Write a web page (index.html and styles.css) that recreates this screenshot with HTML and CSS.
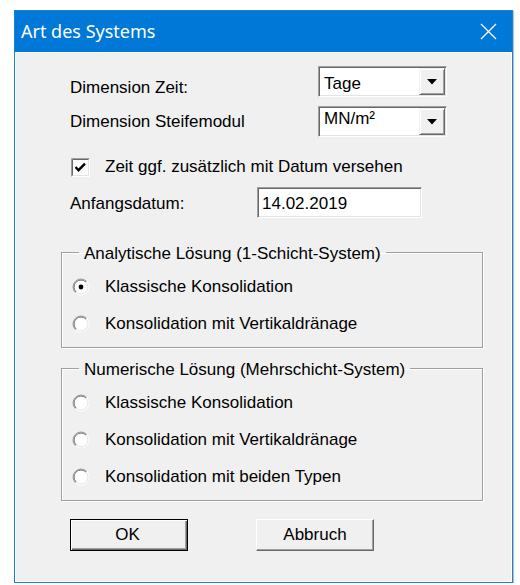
FILE: index.html
```html
<!DOCTYPE html>
<html lang="de">
<head>
<meta charset="utf-8">
<title>Art des Systems</title>
<link rel="stylesheet" href="styles.css">
</head>
<body>
<div class="window">
  <div class="titlebar">
    <span class="title">Art des Systems</span>
    <svg class="close" viewBox="0 0 17 17" width="17" height="17"><path d="M1 1L16 16M16 1L1 16" stroke="#fff" stroke-width="1.4" fill="none"/></svg>
  </div>
  <div class="client">
    <div class="row row-zeit">
      <span class="label label-zeit">Dimension Zeit:</span>
      <div class="combo">
        <span class="value value-zeit">Tage</span>
        <span class="dropbtn"><svg viewBox="0 0 10 6" width="10" height="6"><path d="M0 0H10L5 5.5Z" fill="#000"/></svg></span>
      </div>
    </div>
    <div class="row row-steife">
      <span class="label label-steife">Dimension Steifemodul</span>
      <div class="combo">
        <span class="value value-steife">MN/m²</span>
        <span class="dropbtn"><svg viewBox="0 0 10 6" width="10" height="6"><path d="M0 0H10L5 5.5Z" fill="#000"/></svg></span>
      </div>
    </div>
    <div class="row row-check">
      <svg class="checkbox" viewBox="0 0 19 19" width="19" height="19">
        <rect x="0" y="0" width="19" height="19" fill="#fff"/>
        <path d="M0.5 18.5H18.5V0.5" stroke="#fff" fill="none"/>
        <path d="M1.5 17.5H17.5V1.5" stroke="#e3e3e3" fill="none"/>
        <path d="M0.5 18.5V0.5H18.5" stroke="#a0a0a0" fill="none"/>
        <path d="M1.5 17.5V1.5H17.5" stroke="#696969" fill="none"/>
        <path d="M4.5 9L7.5 12.2L14 5.6" stroke="#000" stroke-width="2.4" fill="none"/>
      </svg>
      <span class="text">Zeit ggf. zusätzlich mit Datum versehen</span>
    </div>
    <div class="row row-date">
      <span class="label label-date">Anfangsdatum:</span>
      <div class="edit"><span class="value value-date">14.02.2019</span></div>
    </div>

    <fieldset class="group group-analytic">
      <legend class="legend">Analytische Lösung (1-Schicht-System)</legend>
      <div class="option">
        <svg class="radio" viewBox="0 0 18 18" width="18" height="18">
          <circle cx="9" cy="9" r="8" fill="#fff"/>
          <path d="M14.66 3.34A8 8 0 0 1 3.34 14.66" stroke="#fff" fill="none"/>
          <path d="M13.95 4.05A7 7 0 0 1 4.05 13.95" stroke="#e3e3e3" fill="none"/>
          <path d="M3.34 14.66A8 8 0 0 1 14.66 3.34" stroke="#a0a0a0" fill="none"/>
          <path d="M4.05 13.95A7 7 0 0 1 13.95 4.05" stroke="#696969" fill="none"/>
          <circle cx="9" cy="9" r="2.4" fill="#000"/>
        </svg>
        <span class="text">Klassische Konsolidation</span>
      </div>
      <div class="option">
        <svg class="radio" viewBox="0 0 18 18" width="18" height="18">
          <circle cx="9" cy="9" r="8" fill="#fff"/>
          <path d="M14.66 3.34A8 8 0 0 1 3.34 14.66" stroke="#fff" fill="none"/>
          <path d="M13.95 4.05A7 7 0 0 1 4.05 13.95" stroke="#e3e3e3" fill="none"/>
          <path d="M3.34 14.66A8 8 0 0 1 14.66 3.34" stroke="#a0a0a0" fill="none"/>
          <path d="M4.05 13.95A7 7 0 0 1 13.95 4.05" stroke="#696969" fill="none"/>
        </svg>
        <span class="text">Konsolidation mit Vertikaldränage</span>
      </div>
    </fieldset>

    <fieldset class="group group-numeric">
      <legend class="legend">Numerische Lösung (Mehrschicht-System)</legend>
      <div class="option">
        <svg class="radio" viewBox="0 0 18 18" width="18" height="18">
          <circle cx="9" cy="9" r="8" fill="#fff"/>
          <path d="M14.66 3.34A8 8 0 0 1 3.34 14.66" stroke="#fff" fill="none"/>
          <path d="M13.95 4.05A7 7 0 0 1 4.05 13.95" stroke="#e3e3e3" fill="none"/>
          <path d="M3.34 14.66A8 8 0 0 1 14.66 3.34" stroke="#a0a0a0" fill="none"/>
          <path d="M4.05 13.95A7 7 0 0 1 13.95 4.05" stroke="#696969" fill="none"/>
        </svg>
        <span class="text">Klassische Konsolidation</span>
      </div>
      <div class="option">
        <svg class="radio" viewBox="0 0 18 18" width="18" height="18">
          <circle cx="9" cy="9" r="8" fill="#fff"/>
          <path d="M14.66 3.34A8 8 0 0 1 3.34 14.66" stroke="#fff" fill="none"/>
          <path d="M13.95 4.05A7 7 0 0 1 4.05 13.95" stroke="#e3e3e3" fill="none"/>
          <path d="M3.34 14.66A8 8 0 0 1 14.66 3.34" stroke="#a0a0a0" fill="none"/>
          <path d="M4.05 13.95A7 7 0 0 1 13.95 4.05" stroke="#696969" fill="none"/>
        </svg>
        <span class="text">Konsolidation mit Vertikaldränage</span>
      </div>
      <div class="option">
        <svg class="radio" viewBox="0 0 18 18" width="18" height="18">
          <circle cx="9" cy="9" r="8" fill="#fff"/>
          <path d="M14.66 3.34A8 8 0 0 1 3.34 14.66" stroke="#fff" fill="none"/>
          <path d="M13.95 4.05A7 7 0 0 1 4.05 13.95" stroke="#e3e3e3" fill="none"/>
          <path d="M3.34 14.66A8 8 0 0 1 14.66 3.34" stroke="#a0a0a0" fill="none"/>
          <path d="M4.05 13.95A7 7 0 0 1 13.95 4.05" stroke="#696969" fill="none"/>
        </svg>
        <span class="text">Konsolidation mit beiden Typen</span>
      </div>
    </fieldset>

    <div class="row row-buttons">
      <div class="button button-default">OK</div>
      <div class="button button-cancel">Abbruch</div>
    </div>
  </div>
</div>
</body>
</html>
```
FILE: styles.css
```css
html, body {
  margin: 0;
  padding: 0;
  background: #ffffff;
}

body {
  padding: 10px 0 0 14px;
}

.window {
  width: 499px;
  height: 573px;
  box-sizing: border-box;
  border: 1px solid #1883d7;
  background: #0078d7;
  display: flex;
  flex-direction: column;
  box-shadow: 1px 1px 1px rgba(0, 0, 0, 0.25);
}

.titlebar {
  height: 41px;
  box-sizing: border-box;
  display: flex;
  align-items: flex-start;
  justify-content: space-between;
  padding: 10px 15px 0 6px;
  background: #0078d7;
  color: #ffffff;
}

.title {
  font-family: "Noto Sans", "Open Sans", sans-serif;
  font-size: 18px;
  line-height: 20px;
}

.close {
  display: block;
  margin-top: 2px;
}

.client {
  flex: 1;
  background: #f0f0f0;
  border: 1px solid #ffffff;
  padding: 13px 0 0 45px;
  font-family: "Liberation Sans", Arial, sans-serif;
  font-size: 17px;
  line-height: 20px;
  color: #000000;
}

.row {
  display: flex;
  align-items: flex-start;
  margin-left: 9px;
}

.label {
  display: block;
}

.row-zeit .label,
.row-steife .label {
  width: 248px;
}

.label-zeit {
  margin-top: 12px;
}

.row-steife {
  margin-top: 8px;
}

.label-steife {
  margin-top: 6px;
}

.combo,
.edit {
  height: 31px;
  box-sizing: border-box;
  background: #ffffff;
  border: 1px solid;
  border-color: #a0a0a0 #ffffff #ffffff #a0a0a0;
  box-shadow: inset 1px 1px 0 #696969, inset -1px -1px 0 #e3e3e3;
  display: flex;
  align-items: stretch;
}

.combo {
  width: 129px;
  padding: 1px;
}

.value {
  flex: 1;
  padding-left: 4px;
}

.value-zeit {
  padding-top: 6px;
}

.value-steife {
  padding-top: 1px;
}

.dropbtn {
  width: 26px;
  box-sizing: border-box;
  background: #f0f0f0;
  border: 1px solid;
  border-color: #f0f0f0 #696969 #696969 #f0f0f0;
  box-shadow: inset 1px 1px 0 #ffffff, inset -1px -1px 0 #a0a0a0;
  display: flex;
  align-items: center;
  justify-content: center;
}

.dropbtn svg {
  display: block;
}

.row-check {
  margin-top: 20px;
  height: 20px;
  align-items: center;
}

.checkbox {
  display: block;
  margin-left: 1px;
  margin-right: 15px;
}

.row-date {
  margin-top: 10px;
}

.label-date {
  width: 187px;
  margin-top: 7px;
}

.edit {
  width: 165px;
  padding: 1px;
}

.value-date {
  padding-top: 5px;
  padding-left: 3px;
}

.group {
  width: 422px;
  box-sizing: border-box;
  margin: 0;
  border: 1px solid #a0a0a0;
  box-shadow: inset 1px 1px 0 #ffffff, 1px 1px 0 #ffffff;
  padding: 4px 0 5px 10px;
  min-width: 0;
}

.group-analytic {
  margin-top: 23px;
}

.group-numeric {
  margin-top: 9px;
}

.legend {
  padding: 3px 5px 0;
  margin-left: 7px;
}

.option {
  height: 37px;
  display: flex;
  align-items: center;
}

.radio {
  display: block;
  margin-right: 15px;
}

.row-buttons {
  margin-top: 18px;
}

.button {
  width: 118px;
  height: 32px;
  box-sizing: border-box;
  background: #f0f0f0;
  display: flex;
  align-items: center;
  justify-content: center;
}

.button-default {
  border: 1px solid #000000;
  box-shadow: inset 1px 1px 0 #ffffff, inset -1px -1px 0 #696969, inset -2px -2px 0 #a0a0a0;
  padding-right: 3px;
}

.button-cancel {
  margin-left: 68px;
  border: 1px solid;
  border-color: #ffffff #696969 #696969 #ffffff;
  box-shadow: inset -1px -1px 0 #a0a0a0;
}
```
